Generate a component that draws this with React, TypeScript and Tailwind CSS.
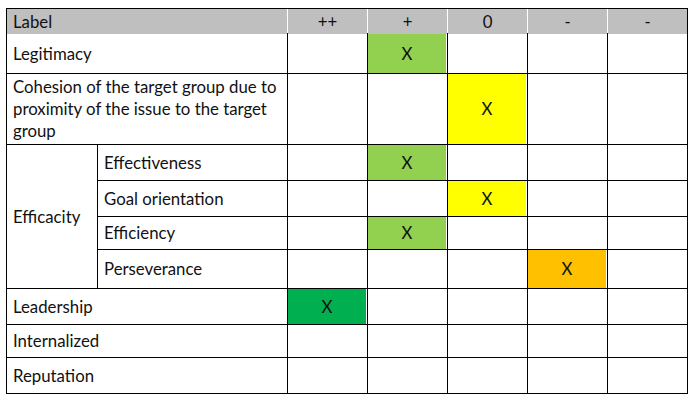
const cols = ["++", "+", "0", "-", "-"];

type Row = {
  label: string[];
  mark?: number;
  color?: string;
};

const rows: Row[] = [
  { label: ["Legitimacy"], mark: 1, color: "bg-[#92d050]" },
  {
    label: ["Cohesion of the target group due to", "proximity of the issue to the target", "group"],
    mark: 2,
    color: "bg-[#ffff00]",
  },
];

const subRows: Row[] = [
  { label: ["Effectiveness"], mark: 1, color: "bg-[#92d050]" },
  { label: ["Goal orientation"], mark: 2, color: "bg-[#ffff00]" },
  { label: ["Efficiency"], mark: 1, color: "bg-[#92d050]" },
  { label: ["Perseverance"], mark: 3, color: "bg-[#ffc000]" },
];

const bottomRows: Row[] = [
  { label: ["Leadership"], mark: 0, color: "bg-[#00b050]" },
  { label: ["Internalized"] },
  { label: ["Reputation"] },
];

function Marks({ row }: { row: Row }) {
  return (
    <>
      {cols.map((_, i) =>
        i === row.mark ? (
          <div key={i} className={`${row.color} flex items-center justify-center border-r border-white`}>
            X
          </div>
        ) : (
          <div key={i} className="bg-white" />
        )
      )}
    </>
  );
}

function Label({ lines, span }: { lines: string[]; span?: boolean }) {
  return (
    <div className={`${span ? "col-span-2" : ""} bg-white flex items-center pl-[6px] leading-[22px]`}>
      <div>
        {lines.map((l, i) => (
          <div key={i}>{l}</div>
        ))}
      </div>
    </div>
  );
}

export default function App() {
  return (
    <div
      className="w-[695px] h-[402px] bg-white pt-[8px] pl-[6px] text-[16.8px] text-[#111]"
      style={{ fontFamily: "Lato, 'Liberation Sans', sans-serif" }}
    >
      <div
        className="grid w-[682px] gap-px bg-black p-px grid-cols-[90px_189px_repeat(5,79px)] grid-rows-[24px_39px_70px_35px_35px_32px_38px_35px_32px_35px]"
      >
        {/* header */}
        <div className="col-span-7 grid grid-cols-[280px_repeat(5,79px)] gap-px bg-white">
          <div className="bg-[#bfbfbf] flex items-center pl-[6px]">Label</div>
          {cols.map((c, i) => (
            <div key={i} className="bg-[#bfbfbf] flex items-center justify-center">
              {c}
            </div>
          ))}
        </div>

        {rows.map((r, i) => (
          <div key={i} className="contents">
            <Label lines={r.label} span />
            <Marks row={r} />
          </div>
        ))}

        <div className="row-span-4 bg-white flex items-center pl-[6px]">Efficacity</div>
        {subRows.map((r, i) => (
          <div key={i} className="contents">
            <Label lines={r.label} />
            <Marks row={r} />
          </div>
        ))}

        {bottomRows.map((r, i) => (
          <div key={i} className="contents">
            <Label lines={r.label} span />
            <Marks row={r} />
          </div>
        ))}
      </div>
    </div>
  );
}
